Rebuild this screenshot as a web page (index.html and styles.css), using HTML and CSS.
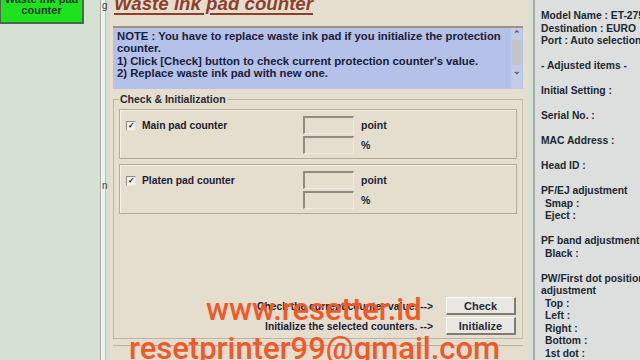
FILE: index.html
```html
<!DOCTYPE html>
<html lang="en">
<head>
    <meta charset="UTF-8">
    <meta name="viewport" content="width=device-width, initial-scale=1.0">
    <title>Waste ink pad counter</title>
    <link rel="stylesheet" href="styles.css">
</head>
<body>

<div class="app">
    <div class="side">
        <div class="menu-btn">Waste ink pad<br>counter</div>
    </div>
    <div class="split"><span class="cut-g">g</span><span class="cut-n">n</span></div>

    <div class="main">
        <h1 class="title">Waste ink pad counter</h1>

        <div class="note">
            <div class="note-text">
                NOTE : You have to replace waste ink pad if you initialize the protection counter.<br>
                1) Click [Check] button to check current protection counter's value.<br>
                2) Replace waste ink pad with new one.
            </div>
            <div class="note-scroll">
                <span class="arrow">&#8963;</span>
                <span class="thumb"></span>
                <span class="arrow">&#8964;</span>
            </div>
        </div>

        <fieldset class="group">
            <legend>Check &amp; Initialization</legend>

            <div class="counter">
                <label class="check"><span class="box">&#10003;</span>Main pad counter</label>
                <div class="values">
                    <div class="value"><span class="field"></span>point</div>
                    <div class="value"><span class="field"></span>%</div>
                </div>
            </div>

            <div class="counter">
                <label class="check"><span class="box">&#10003;</span>Platen pad counter</label>
                <div class="values">
                    <div class="value"><span class="field"></span>point</div>
                    <div class="value"><span class="field"></span>%</div>
                </div>
            </div>

            <div class="actions">
                <div class="action"><span>Check the current counter value. --&gt;</span><button>Check</button></div>
                <div class="action"><span>Initialize the selected counters. --&gt;</span><button>Initialize</button></div>
            </div>
        </fieldset>
        <div class="rule"></div>
    </div>

    <div class="info">
        <p>Model Name : ET-2750<br>Destination : EURO<br>Port : Auto selection</p>
        <p>- Adjusted items -</p>
        <p>Initial Setting :</p>
        <p>Serial No. :</p>
        <p>MAC Address :</p>
        <p>Head ID :</p>
        <p>PF/EJ adjustment<br><span class="sub">Smap :</span><br><span class="sub">Eject :</span></p>
        <p>PF band adjustment<br><span class="sub">Black :</span></p>
        <p>PW/First dot position<br>adjustment<br><span class="sub">Top :</span><br><span class="sub">Left :</span><br><span class="sub">Right :</span><br><span class="sub">Bottom :</span><br><span class="sub">1st dot :</span></p>
    </div>
</div>

<div class="mark mark-site">www.resetter.id</div>
<div class="mark mark-mail">resetprinter99@gmail.com</div>

</body>
</html>
```

FILE: styles.css
```css
body {
    margin: 0;
    width: 640px;
    height: 360px;
    overflow: hidden;
    font-family: "Liberation Sans", Arial, sans-serif;
    font-size: 11px;
    font-weight: bold;
    color: #1e2433;
    background-color: #d7e0d4;
}

.app {
    display: flex;
    height: 360px;
}

.side {
    width: 100px;
    flex-shrink: 0;
}

.menu-btn {
    width: 84px;
    height: 33px;
    margin-top: -9px;
    background-color: #1fe21f;
    border: 1px solid #4a6a4a;
    border-right-width: 2px;
    border-bottom-width: 2px;
    color: #1f3a2a;
    text-align: center;
    line-height: 11px;
    padding-top: 2px;
    box-sizing: border-box;
}

.split {
    position: relative;
    width: 4px;
    margin-right: 4px;
    border-left: 1px solid #a9b0ab;
    border-right: 1px solid #b9c0bb;
    background-color: #eef2ee;
    flex-shrink: 0;
    font-weight: normal;
    font-size: 10px;
    color: #444;
}

.cut-g {
    position: absolute;
    left: 1px;
    top: 0;
}

.cut-n {
    position: absolute;
    left: 1px;
    top: 180px;
}

.main {
    width: 418px;
    flex-shrink: 0;
    background-color: #e5ddcd;
    padding: 0 5px 0 3px;
    box-sizing: border-box;
}

.title {
    margin: -6px 0 0 1px;
    height: 32px;
    font-size: 18.7px;
    font-style: italic;
    font-weight: bold;
    color: #8d3f2d;
    text-decoration: underline;
    text-decoration-thickness: 2px;
    text-underline-offset: 3px;
    line-height: 20px;
}

.note {
    display: flex;
    height: 61px;
    border-top: 2px solid #9a9486;
    background-color: #b6c1ea;
}

.note-text {
    flex: 1;
    padding: 2px 4px 0 4px;
    font-size: 11.3px;
    line-height: 12.3px;
    color: #18203a;
}

.note-scroll {
    width: 11px;
    display: flex;
    flex-direction: column;
    align-items: center;
    background-color: #c4cbe6;
    margin-right: 1px;
}

.arrow {
    height: 12px;
    font-size: 9px;
    line-height: 12px;
    color: #555;
}

.thumb {
    width: 9px;
    height: 25px;
    background-color: #c2c3c8;
}

.group {
    margin: 4px 0 0 0;
    padding: 0 5px 0 5px;
    height: 246px;
    box-sizing: border-box;
    border: 1px solid #bdb6a6;
    border-right-color: #c8c2b3;
    display: flex;
    flex-direction: column;
}

.group legend {
    padding: 0 1px;
    margin-left: 0;
    font-size: 10.5px;
    color: #252a33;
}

.counter {
    display: flex;
    height: 50px;
    box-sizing: border-box;
    margin-top: 4px;
    border: 1px solid #b2ac9c;
    box-shadow: inset 1px 1px 0 #f3efe6;
    padding: 6px 0 0 6px;
}

.counter + .counter {
    margin-top: 5px;
}

.check {
    width: 177px;
    display: flex;
    align-items: flex-start;
    padding-top: 4px;
    font-size: 10.3px;
    color: #1c2030;
}

.box {
    width: 8px;
    height: 8px;
    border: 1px solid #8e8e86;
    border-right-color: #e8e4da;
    border-bottom-color: #e8e4da;
    background-color: #f3f1ec;
    font-size: 8px;
    line-height: 8px;
    text-align: center;
    margin-right: 6px;
    margin-top: 1px;
    color: #111;
}

.values {
    display: flex;
    flex-direction: column;
    gap: 2px;
}

.value {
    display: flex;
    align-items: center;
    gap: 7px;
    height: 18px;
    font-size: 10.5px;
}

.field {
    width: 51px;
    height: 18px;
    box-sizing: border-box;
    border-top: 2px solid #908b80;
    border-left: 2px solid #908b80;
    border-right: 1px solid #efeae0;
    border-bottom: 1px solid #efeae0;
}

.actions {
    margin-top: auto;
    margin-bottom: 3px;
    display: flex;
    flex-direction: column;
    gap: 2px;
    align-items: flex-end;
    padding-right: 1px;
}

.action {
    display: flex;
    align-items: center;
    gap: 13px;
    font-size: 10.3px;
    color: #1c2030;
}

.action button {
    width: 70px;
    height: 18px;
    padding: 0;
    font-family: "Liberation Sans", Arial, sans-serif;
    font-size: 11px;
    font-weight: bold;
    color: #1f2a3a;
    background-color: #e9e7e2;
    border: 1px solid #fbfaf7;
    border-right: 2px solid #7e7b74;
    border-bottom: 2px solid #7e7b74;
}

.rule {
    margin: 6px 0 0 0;
    border-top: 1px solid #b9b3a5;
}

.info {
    margin-left: 5px;
    flex: 1;
    border-left: 2px solid #a5abab;
    background-color: #dddfde;
    padding: 10px 0 0 6px;
    white-space: nowrap;
    overflow: hidden;
    font-size: 10.3px;
    line-height: 12.5px;
    color: #202830;
}

.info p {
    margin: 0 0 12.5px 0;
}

.sub {
    padding-left: 4px;
}

.mark {
    position: absolute;
    font-family: Roboto, "Liberation Sans", sans-serif;
    font-weight: 500;
    color: #f0592a;
    white-space: nowrap;
    line-height: 1;
}

.mark-site {
    left: 206px;
    top: 294px;
    font-size: 31px;
}

.mark-mail {
    left: 129px;
    top: 333px;
    font-size: 31px;
}
```
